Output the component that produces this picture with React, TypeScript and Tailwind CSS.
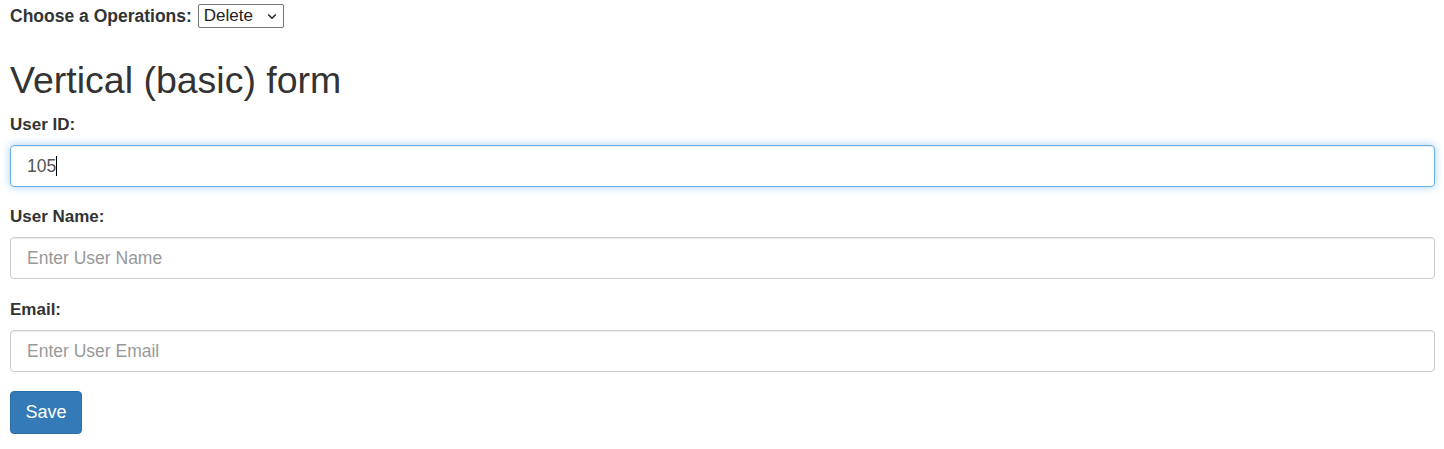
import { useState } from 'react';

const inputBase =
  'block w-full h-[42px] px-[16px] text-[17.5px] text-[#555] placeholder:text-[#999] rounded-[4px] outline-none font-["Liberation_Sans",Arial,sans-serif]';

export default function App() {
  const [op, setOp] = useState('Delete');
  const [userId, setUserId] = useState('105');

  return (
    <div className="min-h-screen bg-white px-[10px] pr-[9px] text-[#333] font-['Liberation_Sans',Arial,sans-serif]">
      <div className="flex items-center pt-[4px] h-[28px]">
        <label className="text-[17.5px] font-bold mr-[6px]">Choose a Operations:</label>
        <div className="relative">
          <select
            value={op}
            onChange={(e) => setOp(e.target.value)}
            className="appearance-none h-[24px] w-[86px] border border-[#767676] rounded-[2px] text-[17px] leading-[22px] text-[#222] pl-[5px] bg-white outline-none"
          >
            <option>Insert</option>
            <option>Update</option>
            <option>Delete</option>
          </select>
          {/* chevron */}
          <svg
            className="pointer-events-none absolute right-[7px] top-[9px]"
            width="10"
            height="7"
            viewBox="0 0 10 7"
            fill="none"
          >
            <path d="M1.2 1.5L5 5.2L8.8 1.5" stroke="#222" strokeWidth="1.5" />
          </svg>
        </div>
      </div>

      <h2 className="text-[37.5px] leading-[40px] font-normal mt-[32px] mb-[13px]">Vertical (basic) form</h2>

      <form onSubmit={(e) => e.preventDefault()}>
        <div className="mb-[18px]">
          <label className="block text-[17px] leading-[23px] font-bold mb-[9px]">User ID:</label>
          <div className="relative">
            <input
              value={userId}
              onChange={(e) => setUserId(e.target.value)}
              className={`${inputBase} caret-transparent border border-[#66afe9] shadow-[inset_0_1px_1px_rgba(0,0,0,0.075),0_0_8px_rgba(102,175,233,0.6)]`}
            />
            {/* text caret */}
            <div className="pointer-events-none absolute inset-0 flex items-center pl-[17px] text-[17.5px] text-transparent">
              <span>{userId}</span>
              <span className="w-[1px] h-[20px] bg-black" />
            </div>
          </div>
        </div>
        <div className="mb-[19px]">
          <label className="block text-[17px] leading-[23px] font-bold mb-[9px]">User Name:</label>
          <input
            placeholder="Enter User Name"
            className={`${inputBase} border border-[#ccc] shadow-[inset_0_1px_1px_rgba(0,0,0,0.075)]`}
          />
        </div>
        <div className="mb-[19px]">
          <label className="block text-[17px] leading-[23px] font-bold mb-[9px]">Email:</label>
          <input
            placeholder="Enter User Email"
            className={`${inputBase} border border-[#ccc] shadow-[inset_0_1px_1px_rgba(0,0,0,0.075)]`}
          />
        </div>
        <button
          type="submit"
          className="h-[43px] w-[72px] bg-[#337ab7] border border-[#2e6da4] rounded-[4px] text-white text-[18px]"
        >
          Save
        </button>
      </form>
    </div>
  );
}
